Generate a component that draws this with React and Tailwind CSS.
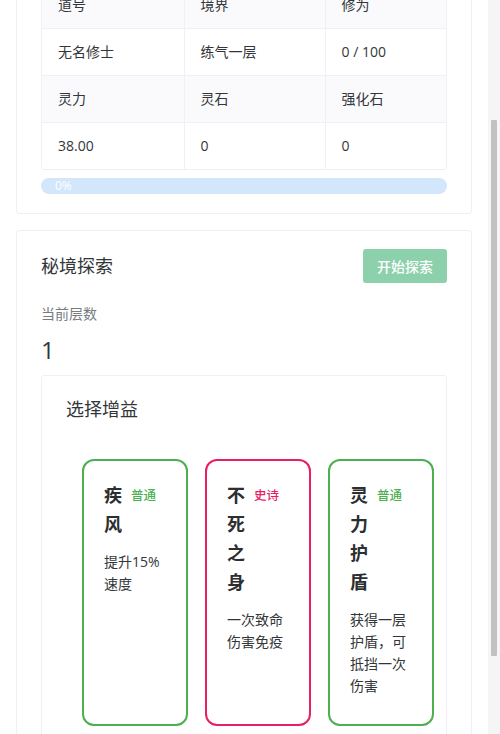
import React, { useLayoutEffect, useRef } from "react";

const infoRows = [
  { head: true, cells: ["道号", "境界", "修为"] },
  { head: false, cells: ["无名修士", "练气一层", "0 / 100"] },
  { head: true, cells: ["灵力", "灵石", "强化石"] },
  { head: false, cells: ["38.00", "0", "0"] },
];

const buffs = [
  { name: "疾风", tag: "普通", desc: "提升15%速度", epic: false },
  { name: "不死之身", tag: "史诗", desc: "一次致命伤害免疫", epic: true },
  { name: "灵力护盾", tag: "普通", desc: "获得一层护盾，可抵挡一次伤害", epic: false },
];

const BuffCard = ({ buff }) => (
  <div
    className={`w-[106px] h-[267px] shrink-0 rounded-[12px] border-2 px-5 pt-5 ${
      buff.epic ? "border-[#e91e63]" : "border-[#4caf50]"
    }`}
  >
    <div className="flex items-start gap-[9px]">
      <h3 className="w-[18px] text-[18px] font-bold leading-[29px] text-[#2c2e30]">{buff.name}</h3>
      <span
        className={`text-[12.5px] font-medium leading-[29px] whitespace-nowrap ${
          buff.epic ? "text-[#e91e63]" : "text-[#4caf50]"
        }`}
      >
        {buff.tag}
      </span>
    </div>
    <p className="mt-3 text-[14px] leading-[22px]">{buff.desc}</p>
  </div>
);

export default function App() {
  const scrollRef = useRef(null);
  const tableRef = useRef(null);

  // page is shown scrolled so the first table row is cut at the top
  useLayoutEffect(() => {
    if (scrollRef.current && tableRef.current) {
      scrollRef.current.scrollTop = tableRef.current.offsetTop + 20;
    }
  }, []);

  return (
    <div className="flex h-[734px] bg-white text-[#333639] font-['Open_Sans','Noto_Sans_CJK_SC',sans-serif]">
      <div
        ref={scrollRef}
        className="relative h-full flex-1 overflow-y-scroll [scrollbar-width:none] [&::-webkit-scrollbar]:hidden"
      >
        <div className="flex flex-col gap-4 px-4 pt-4 pb-[63px]">
          <section className="rounded-[3px] border border-[#efeff5] px-6 pt-[18px] pb-[19px]">
            <div className="mb-[75px] flex h-[34px] items-center">
              <h2 className="text-[18px]">修士信息</h2>
            </div>
            <div ref={tableRef} className="overflow-hidden rounded-[3px] border border-[#efeff5]">
              <table className="w-full table-fixed border-collapse text-[14px]">
                <colgroup>
                  <col className="w-[142px]" />
                  <col className="w-[141px]" />
                  <col />
                </colgroup>
                <tbody>
                  {infoRows.map((row, i) => (
                    <tr key={i} className={`h-[47px] ${row.head ? "bg-[#fafafc]" : "bg-white"}`}>
                      {row.cells.map((c, j) => (
                        <td
                          key={j}
                          className={`px-4 ${i < infoRows.length - 1 ? "border-b" : ""} ${
                            j < 2 ? "border-r" : ""
                          } border-[#efeff5]`}
                        >
                          {c}
                        </td>
                      ))}
                    </tr>
                  ))}
                </tbody>
              </table>
            </div>
            <div className="mt-2 h-4 rounded-full bg-[#d2e6fc] pl-[14px] text-[12px] leading-4 text-white">
              0%
            </div>
          </section>

          <section className="rounded-[3px] border border-[#efeff5] px-6 pt-[18px] pb-6">
            <div className="flex h-[34px] items-center justify-between">
              <h2 className="text-[18px]">秘境探索</h2>
              <button className="h-[34px] w-[84px] rounded-[3px] bg-[#8cd0ac] text-[14px] font-medium text-white">
                开始探索
              </button>
            </div>
            <div className="mt-5 text-[14px] leading-[22px] text-[#767c82]">当前层数</div>
            <div className="mt-[10px] text-[24px] leading-[30px]">1</div>

            <div className="mt-[10px] rounded-[3px] border border-[#efeff5] px-6 pt-[19px] pb-6">
              <h2 className="text-[18px] leading-[29px]">选择增益</h2>
              <div className="mt-[35px] flex gap-[17px] pl-4">
                {buffs.map((b) => (
                  <BuffCard key={b.name} buff={b} />
                ))}
              </div>
            </div>
          </section>
        </div>
      </div>
      {/* window scrollbar */}
      <div className="w-[12px] shrink-0 bg-[#f5f5f5] pt-[120px]">
        <div className="mx-[3px] h-[536px] rounded-[1px] bg-[#c1c1c1]" />
      </div>
    </div>
  );
}
